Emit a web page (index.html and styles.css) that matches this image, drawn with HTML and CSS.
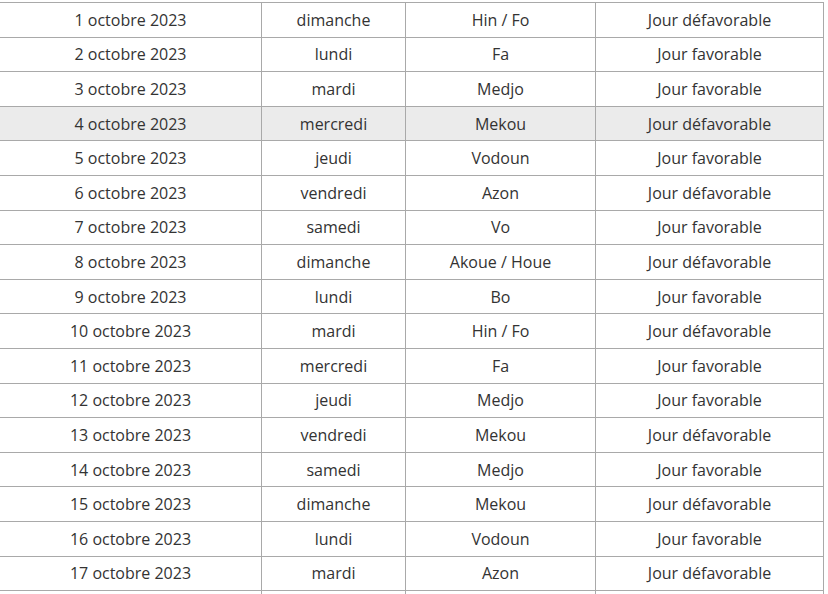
FILE: index.html
```html
<!DOCTYPE html>
<html lang="fr">
<head>
<meta charset="utf-8">
<title>Calendrier octobre 2023</title>
<link rel="stylesheet" href="styles.css">
</head>
<body>
<table class="cal">
<colgroup><col class="c1"><col class="c2"><col class="c3"><col class="c4"></colgroup>
<tbody>
<tr><td>1 octobre 2023</td><td>dimanche</td><td>Hin / Fo</td><td>Jour défavorable</td></tr>
<tr><td>2 octobre 2023</td><td>lundi</td><td>Fa</td><td>Jour favorable</td></tr>
<tr><td>3 octobre 2023</td><td>mardi</td><td>Medjo</td><td>Jour favorable</td></tr>
<tr class="hl"><td>4 octobre 2023</td><td>mercredi</td><td>Mekou</td><td>Jour défavorable</td></tr>
<tr><td>5 octobre 2023</td><td>jeudi</td><td>Vodoun</td><td>Jour favorable</td></tr>
<tr><td>6 octobre 2023</td><td>vendredi</td><td>Azon</td><td>Jour défavorable</td></tr>
<tr><td>7 octobre 2023</td><td>samedi</td><td>Vo</td><td>Jour favorable</td></tr>
<tr><td>8 octobre 2023</td><td>dimanche</td><td>Akoue / Houe</td><td>Jour défavorable</td></tr>
<tr><td>9 octobre 2023</td><td>lundi</td><td>Bo</td><td>Jour favorable</td></tr>
<tr><td>10 octobre 2023</td><td>mardi</td><td>Hin / Fo</td><td>Jour défavorable</td></tr>
<tr><td>11 octobre 2023</td><td>mercredi</td><td>Fa</td><td>Jour favorable</td></tr>
<tr><td>12 octobre 2023</td><td>jeudi</td><td>Medjo</td><td>Jour favorable</td></tr>
<tr><td>13 octobre 2023</td><td>vendredi</td><td>Mekou</td><td>Jour défavorable</td></tr>
<tr><td>14 octobre 2023</td><td>samedi</td><td>Medjo</td><td>Jour favorable</td></tr>
<tr><td>15 octobre 2023</td><td>dimanche</td><td>Mekou</td><td>Jour défavorable</td></tr>
<tr><td>16 octobre 2023</td><td>lundi</td><td>Vodoun</td><td>Jour favorable</td></tr>
<tr><td>17 octobre 2023</td><td>mardi</td><td>Azon</td><td>Jour défavorable</td></tr>
<tr><td>18 octobre 2023</td><td>mercredi</td><td>Vo</td><td>Jour favorable</td></tr>
</tbody>
</table>
</body>
</html>
```
FILE: styles.css
```css
html, body {
  margin: 0;
  padding: 0;
  background: #ffffff;
  overflow: hidden;
}
body {
  font-family: "Open Sans", "Liberation Sans", sans-serif;
  font-size: 16px;
  color: #333333;
}
.cal {
  border-collapse: collapse;
  table-layout: fixed;
  width: 824px;
  margin: 2px 0 0 -1px;
}
.c1 { width: 262px; }
.c2 { width: 144px; }
.c3 { width: 190px; }
.c4 { width: 228px; }
.cal td {
  border: 1px solid #a9a9a9;
  text-align: center;
  line-height: 24px;
  padding: 4.8px 4px;
  white-space: nowrap;
}
.cal tr.hl td {
  background: #ebebeb;
}
```
